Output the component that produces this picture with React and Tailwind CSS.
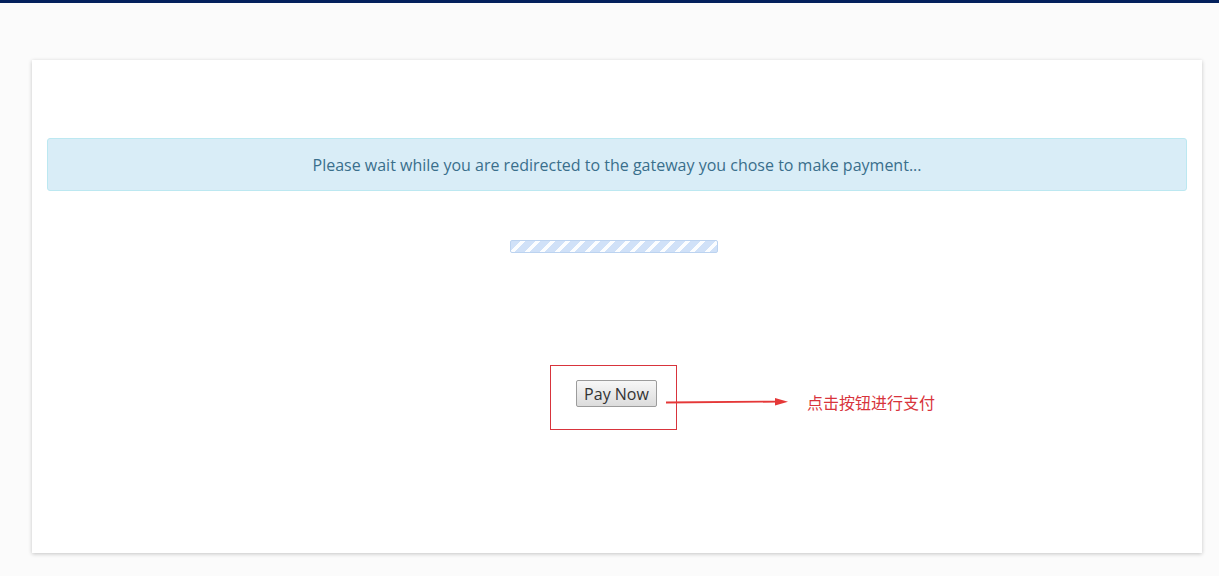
export default function App() {
  return (
    <div className="min-h-[576px] bg-[#fbfbfb] font-['Open_Sans','Noto_Sans',sans-serif]">
      <div className="h-[3px] bg-[#03205c]" />
      <div className="pt-[57px] pl-[32px]">
        <div className="w-[1170px] h-[493px] bg-white shadow-[0_1px_4px_rgba(0,0,0,0.22)] px-[15px] pt-[78px]">
          {/* Alert */}
          <div className="h-[53px] rounded-[3px] border border-[#bce8f1] bg-[#d9edf7] flex items-center justify-center text-[16px] text-[#3a6f8c]">
            Please wait while you are redirected to the gateway you chose to make payment...
          </div>

          {/* Progress */}
          <div className="mt-[49px] flex justify-center">
            <div className="ml-[-6px] w-[208px] h-[13px] rounded-[2px] border border-[#bcd3f0] bg-[repeating-linear-gradient(135deg,#d0e1f8_0px,#d0e1f8_7px,#fbfdff_7px,#fbfdff_10.6px)]" />
          </div>

          {/* Pay button */}
          <div className="mt-[112px] flex justify-center">
            <div className="relative ml-[-7px] w-[127px] h-[65px] border border-[#d8343c] pl-[25px] pt-[14px]">
              <button className="w-[81px] h-[27px] rounded-[2px] border border-[#9c9c9c] bg-[linear-gradient(#f7f7f7,#dcdcdc)] text-[16px] leading-none text-[#333] font-['Open_Sans',sans-serif]">
                Pay Now
              </button>
              {/* annotation */}
              <svg className="absolute left-[115px] top-[31px]" width="123" height="10" viewBox="0 0 123 10">
                <path d="M0 5.5 L112 4.6" stroke="#e53838" strokeWidth="1.8" fill="none" />
                <path d="M109 1 L122 4.8 L109 8.6 Z" fill="#e53838" />
              </svg>
              <span className="absolute left-[256px] top-[28px] whitespace-nowrap text-[16px] leading-none text-[#d8343c] font-['Noto_Sans_CJK_SC',sans-serif]">
                点击按钮进行支付
              </span>
            </div>
          </div>
        </div>
      </div>
    </div>
  );
}
